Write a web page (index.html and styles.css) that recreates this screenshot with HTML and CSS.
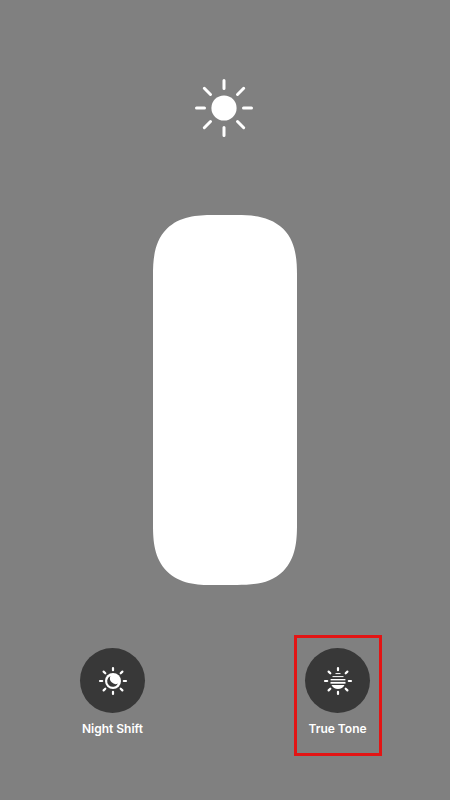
FILE: index.html
```html
<!DOCTYPE html>
<html lang="en">
<head>
<meta charset="utf-8">
<meta name="viewport" content="width=device-width, initial-scale=1">
<title>Brightness</title>
<link rel="stylesheet" href="styles.css">
</head>
<body>
<main class="panel">
  <svg class="sun" viewBox="0 0 58 58" aria-hidden="true">
    <circle cx="29" cy="29" r="12.6" fill="#fff"/>
    <path d="M29 1.500v8M29 48.500v8M1.500 29h8M48.500 29h8M9.300 9.300l6.200 6.200M42.500 42.500l6.200 6.200M48.700 9.300l-6.200 6.200M15.500 42.500l-6.200 6.200" fill="none" stroke="#fff" stroke-width="3" stroke-linecap="round"/>
  </svg>
  <input class="brightness" type="range" min="0" max="100" value="100" aria-label="Brightness">
  <div class="options">
    <button class="option" type="button">
      <span class="disc">
        <svg class="glyph" viewBox="0 0 30 30" aria-hidden="true">
          <path d="M15 2v2.200M15 25.800v2.200M2 15h2.200M25.800 15h2.200M5.600 5.600l1.700 1.700M22.700 22.700l1.700 1.700M24.400 5.600l-1.700 1.700M7.300 22.700l-1.700 1.700" fill="none" stroke="#fff" stroke-width="2.200" stroke-linecap="round"/>
          <circle cx="15" cy="15" r="8" fill="#fff"/>
          <path d="M12.400 10A5.700 5.700 0 1 0 20 17.600A5.800 5.800 0 0 1 12.400 10Z" fill="#383838"/>
        </svg>
      </span>
      <span class="label">Night Shift</span>
    </button>
    <button class="option marked" type="button">
      <span class="disc">
        <svg class="glyph" viewBox="0 0 30 30" aria-hidden="true">
          <path d="M15 2v2.200M15 25.800v2.200M2 15h2.200M25.800 15h2.200M5.600 5.600l1.700 1.700M22.700 22.700l1.700 1.700M24.400 5.600l-1.700 1.700M7.300 22.700l-1.700 1.700" fill="none" stroke="#fff" stroke-width="2.200" stroke-linecap="round"/>
          <path d="M12.500 7.600h5M9.500 10.600h11" fill="none" stroke="#fff" stroke-width="1"/>
          <path d="M7.600 13.700h14.800" fill="none" stroke="#fff" stroke-width="1.400"/>
          <path d="M7.500 16.800h15" fill="none" stroke="#fff" stroke-width="1.800"/>
          <path d="M8.500 19h13C20.300 21.500 17.900 23 15 23S9.700 21.500 8.500 19Z" fill="#fff"/>
        </svg>
      </span>
      <span class="label">True Tone</span>
    </button>
  </div>
</main>
</body>
</html>
```
FILE: styles.css
```css
* {
  box-sizing: border-box;
}

body {
  margin: 0;
  background: #808080;
  color: #fff;
  font-family: Inter, "Liberation Sans", sans-serif;
}

.panel {
  display: flex;
  flex-direction: column;
  align-items: center;
  min-height: 100vh;
  padding: 79px 0 44px;
}

.sun {
  width: 58px;
  height: 58px;
  margin-right: 2px;
  margin-bottom: 78px;
}

.brightness {
  appearance: none;
  writing-mode: vertical-lr;
  direction: rtl;
  flex: 1;
  width: 32%;
  min-height: 200px;
  margin: 0 0 50px;
  border-radius: 46px;
  background: #fff;
  overflow: hidden;
}

@supports (corner-shape: superellipse(1.4)) {
  .brightness {
    border-radius: 60px;
    corner-shape: superellipse(1.4);
  }
}

.brightness::-webkit-slider-thumb {
  appearance: none;
  width: 100%;
  height: 1px;
  background: transparent;
}

.options {
  display: grid;
  grid-template-columns: 1fr 1fr;
  justify-items: center;
  width: 100%;
}

.option {
  display: flex;
  flex-direction: column;
  align-items: center;
  gap: 8px;
  width: 88px;
  padding: 10px 0 16px;
  border: 3px solid transparent;
  background: none;
  color: inherit;
  font: inherit;
}

.marked {
  border-color: #e31414;
}

.disc {
  display: grid;
  place-items: center;
  width: 65px;
  height: 65px;
  border-radius: 50%;
  background: #383838;
}

.glyph {
  width: 30px;
  height: 30px;
}

.label {
  font-size: 12px;
  font-weight: 600;
  line-height: 16px;
  white-space: nowrap;
}
```
